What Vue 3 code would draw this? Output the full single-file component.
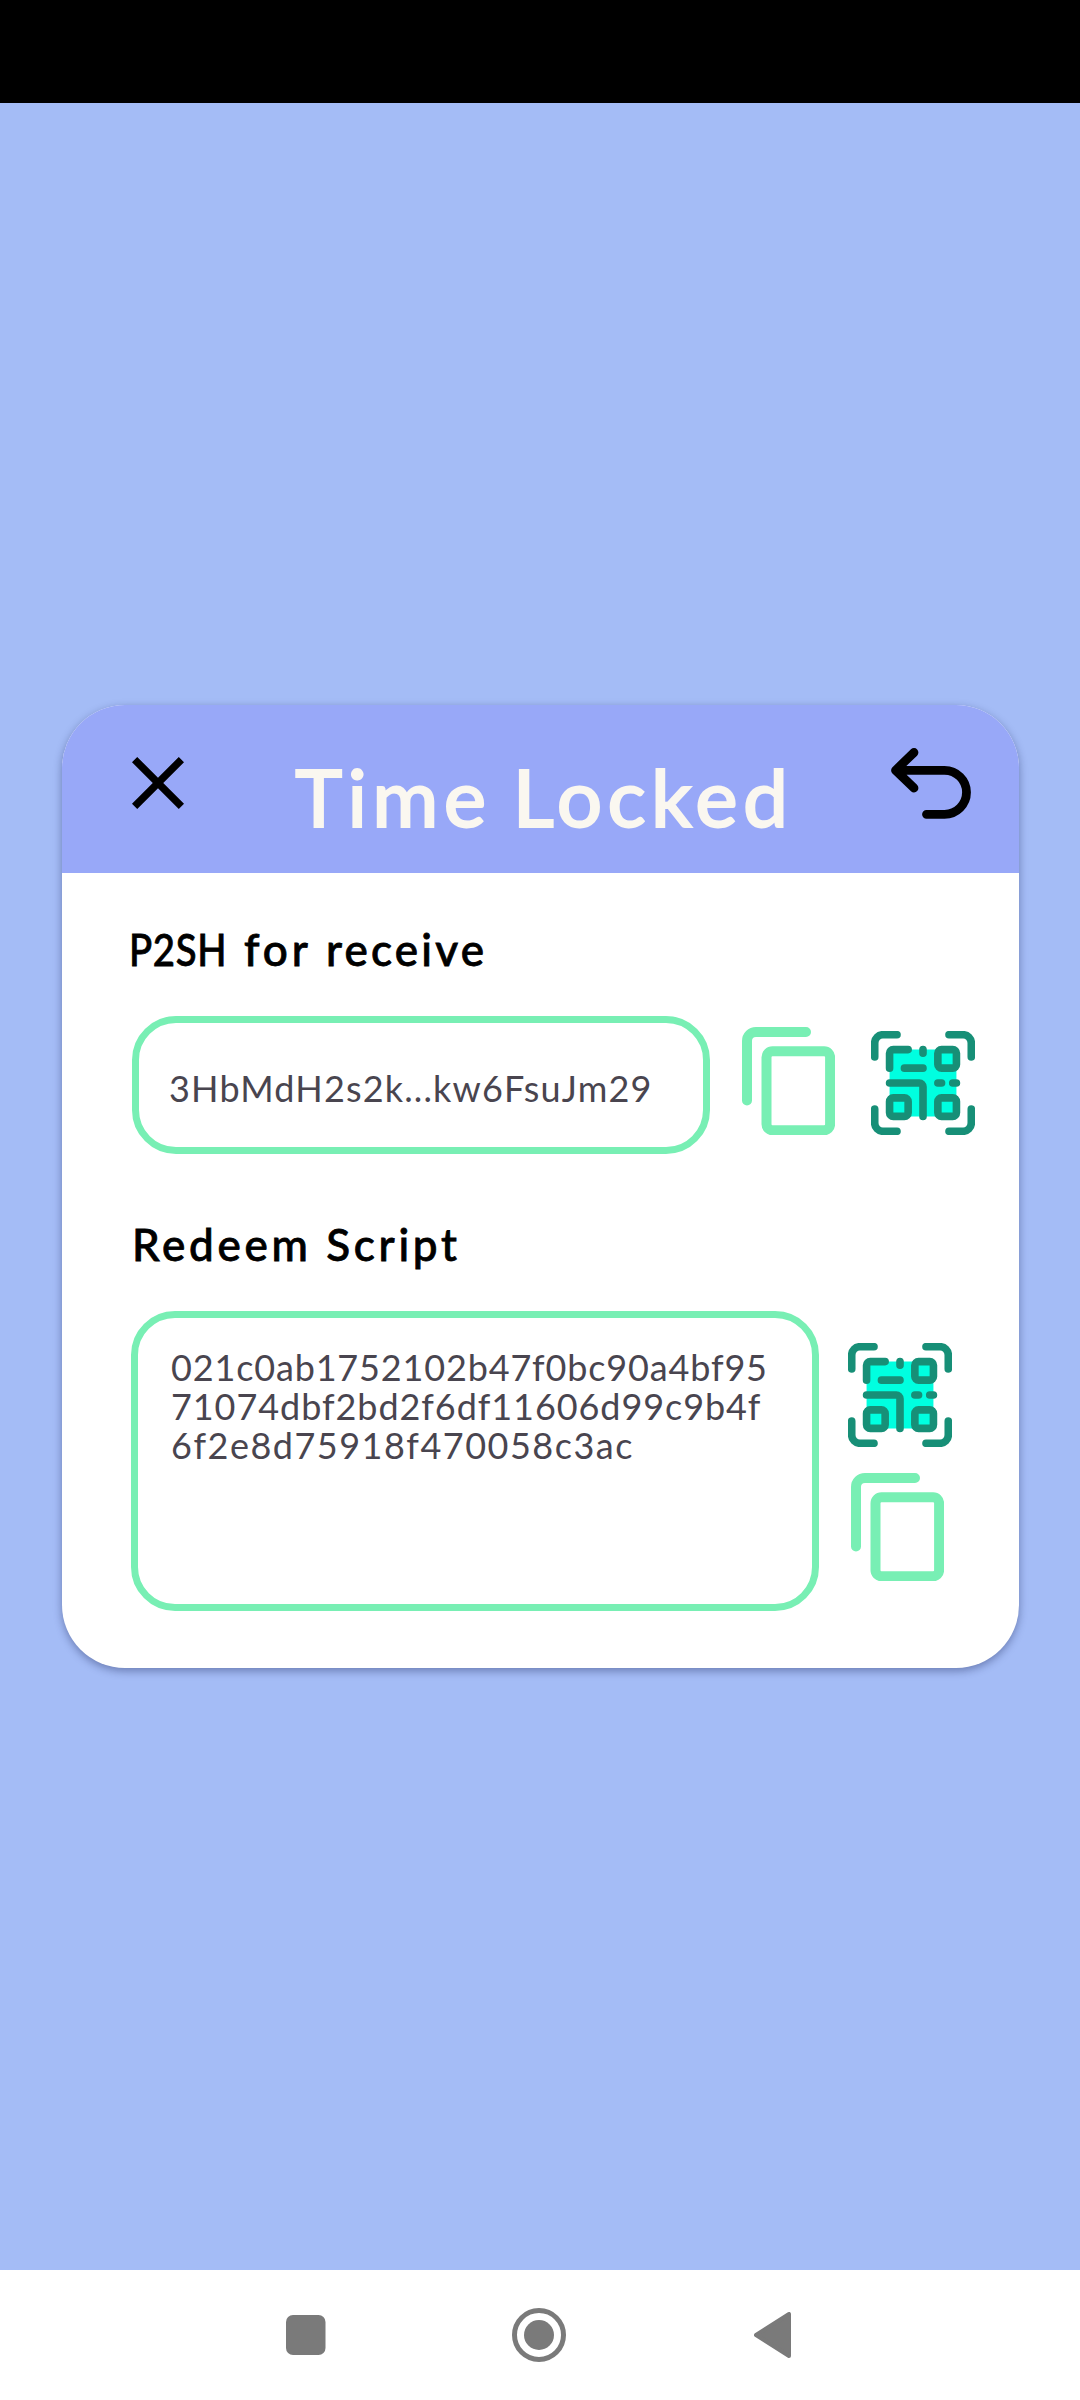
<script setup>
const scriptLines = [
  { text: '021c0ab1752102b47f0bc90a4bf95', cls: 'l1' },
  { text: '71074dbf2bd2f6df11606d99c9b4f', cls: 'l2' },
  { text: '6f2e8d75918f470058c3ac', cls: 'l3' },
]
</script>

<template>
  <div class="screen">
    <svg width="0" height="0" class="defs">
      <symbol id="copy" viewBox="0 0 93 108">
        <path d="M5 73.5V14a9 9 0 0 1 9-9H64" fill="none" stroke="#78efb4" stroke-width="10" stroke-linecap="round" />
        <rect x="24.5" y="24.3" width="63.6" height="79" rx="6" fill="none" stroke="#78efb4" stroke-width="10" />
      </symbol>
      <symbol id="qr" viewBox="0 0 28 28">
        <path d="M5 5h18v18h-18z" fill="#00ffe0" />
        <path
          d="M1 7V3.2A2.2 2.2 0 0 1 3.2 1H7M21 1h3.8A2.2 2.2 0 0 1 27 3.2V7M27 21v3.8a2.2 2.2 0 0 1-2.2 2.2H21M7 27H3.2A2.2 2.2 0 0 1 1 24.8V21M5 10V6a1 1 0 0 1 1-1h4M14 5v1M9 10h5M5 14h8a1 1 0 0 1 1 1v8M18 14h1M22 14h1M19 5h3a1 1 0 0 1 1 1v3a1 1 0 0 1-1 1h-3a1 1 0 0 1-1-1V6a1 1 0 0 1 1-1zM6 18h3a1 1 0 0 1 1 1v3a1 1 0 0 1-1 1H6a1 1 0 0 1-1-1v-3a1 1 0 0 1 1-1zM19 18h3a1 1 0 0 1 1 1v3a1 1 0 0 1-1 1h-3a1 1 0 0 1-1-1v-3a1 1 0 0 1 1-1z"
          fill="none" stroke="#178f77" stroke-width="2.05" stroke-linecap="round" stroke-linejoin="round"
        />
      </symbol>
    </svg>

    <div class="status"></div>

    <main class="stage">
      <section class="card">
        <header class="head">
          <svg class="close" viewBox="5 5 14 14">
            <path d="M19 6.41L17.59 5 12 10.59 6.41 5 5 6.41 10.59 12 5 17.59 6.41 19 12 13.41 17.59 19 19 17.59 13.41 12z" />
          </svg>
          <h1 class="title">Time Locked</h1>
          <svg class="back" viewBox="0 0 80 71">
            <path d="M23 4.5L4.5 22.3L23 40M4.5 22.3H53.5a22 22 0 0 1 0 44H35.5" fill="none" stroke="#000" stroke-width="8.8" stroke-linecap="round" stroke-linejoin="round" />
          </svg>
        </header>

        <div class="body">
          <h2 class="label label-a"><span class="w1">P2SH </span><span class="w2">for </span><span class="w3">receive</span></h2>
          <div class="row row-a">
            <div class="field field-a"><span class="addr">3HbMdH2s2k...kw6FsuJm29</span></div>
            <svg class="copy"><use href="#copy" /></svg>
            <svg class="qr"><use href="#qr" /></svg>
          </div>
          <h2 class="label label-b">Redeem Script</h2>
          <div class="row row-b">
            <div class="field field-b">
              <div v-for="l in scriptLines" :key="l.cls" class="line"><span :class="l.cls">{{ l.text }}</span></div>
            </div>
            <div class="side">
              <svg class="qr"><use href="#qr" /></svg>
              <svg class="copy"><use href="#copy" /></svg>
            </div>
          </div>
        </div>
      </section>
    </main>

    <nav class="nav">
      <svg class="recent" viewBox="0 0 40 40"><rect width="39.5" height="40" rx="7" fill="#7a7a7a" /></svg>
      <svg class="home" viewBox="0 0 54 54">
        <circle cx="27" cy="27" r="24.5" fill="none" stroke="#7a7a7a" stroke-width="5" />
        <circle cx="27" cy="27" r="15" fill="#7a7a7a" />
      </svg>
      <svg class="prev" viewBox="0 0 37 46"><path d="M2 23L35 2V44z" fill="#7a7a7a" stroke="#7a7a7a" stroke-width="4" stroke-linejoin="round" /></svg>
    </nav>
  </div>
</template>

<style>
body { margin: 0; }
</style>

<style scoped>
.screen {
  width: 1080px;
  height: 2400px;
  display: flex;
  flex-direction: column;
  background: #a4bcf6;
  font-family: Lato, "Open Sans", sans-serif;
  overflow: hidden;
  position: relative;
}
.defs { position: absolute; }
.status { height: 103px; background: #000; flex: none; }
.stage { flex: 1; padding: 602px 61px 0 62px; }
.card {
  height: 963px;
  border-radius: 63px;
  overflow: hidden;
  background: #fff;
  box-shadow: 0 3px 9px rgba(20, 30, 80, 0.4);
}
.head {
  height: 168px;
  box-sizing: border-box;
  padding: 0 48px 0 70px;
  background: #98a8f8;
  display: flex;
  align-items: flex-start;
}
.close { width: 52px; height: 52px; margin-top: 52px; flex: none; }
.title {
  margin: 43px 0 0 111px;
  width: 520px;
  font-size: 80px;
  line-height: 96px;
  font-weight: 500;
  color: #faf7f0;
  letter-spacing: 5.3px;
  word-spacing: -4px;
  white-space: nowrap;
  -webkit-text-stroke: 1.8px #faf7f0;
}
.back { width: 80px; height: 71px; margin: 42.5px 0 0 auto; flex: none; }
.body { padding-left: 69px; }
.label {
  margin: 0;
  font-weight: 500;
  font-size: 44px;
  line-height: 52px;
  color: #000;
  white-space: nowrap;
  -webkit-text-stroke: 0.8px #000;
}
.label-a { padding: 50px 0 3px 0; display: flex; }
.w1 { width: 112px; margin-left: -2px; letter-spacing: 0.8px; transform: scaleX(0.87); transform-origin: 0 50%; }
.w2 { width: 85px; padding-left: 3px; box-sizing: border-box; letter-spacing: 4px; }
.w3 { letter-spacing: 3.2px; }
.label-b { padding: 64px 0 3px 1px; letter-spacing: 3.7px; }
.row { display: flex; align-items: flex-start; }
.row-a { margin-top: 38px; padding-left: 1px; }
.row-b { margin-top: 38px; }
.field {
  box-sizing: border-box;
  border: 7px solid #78efb4;
  border-radius: 44px;
  color: #49454f;
  font-size: 36px;
  white-space: nowrap;
}
.field-a { width: 578px; height: 138px; padding: 43px 0 0 30px; line-height: 44px; }
.addr { letter-spacing: 1.15px; }
.field-b { width: 688px; height: 300px; padding: 30px 0 0 33px; }
.line { height: 39px; line-height: 39px; }
.l1 { letter-spacing: 0.84px; }
.l2 { letter-spacing: 0.93px; }
.l3 { letter-spacing: 1.5px; }
.copy { width: 93px; height: 108px; flex: none; }
.qr { width: 104px; height: 104px; flex: none; }
.row-a .copy { margin: 11px 0 0 32px; }
.row-a .qr { margin: 15px 0 0 36px; }
.side { display: flex; flex-direction: column; margin: 32px 0 0 29px; }
.side .copy { margin: 26px 0 0 3px; }
.nav {
  height: 130px;
  background: #fff;
  display: flex;
  align-items: center;
  box-sizing: border-box;
  padding-left: 285.5px;
  flex: none;
}
.recent { width: 40px; height: 40px; }
.home { width: 54px; height: 54px; margin-left: 186.5px; }
.prev { width: 37px; height: 46px; margin-left: 188px; }
</style>
